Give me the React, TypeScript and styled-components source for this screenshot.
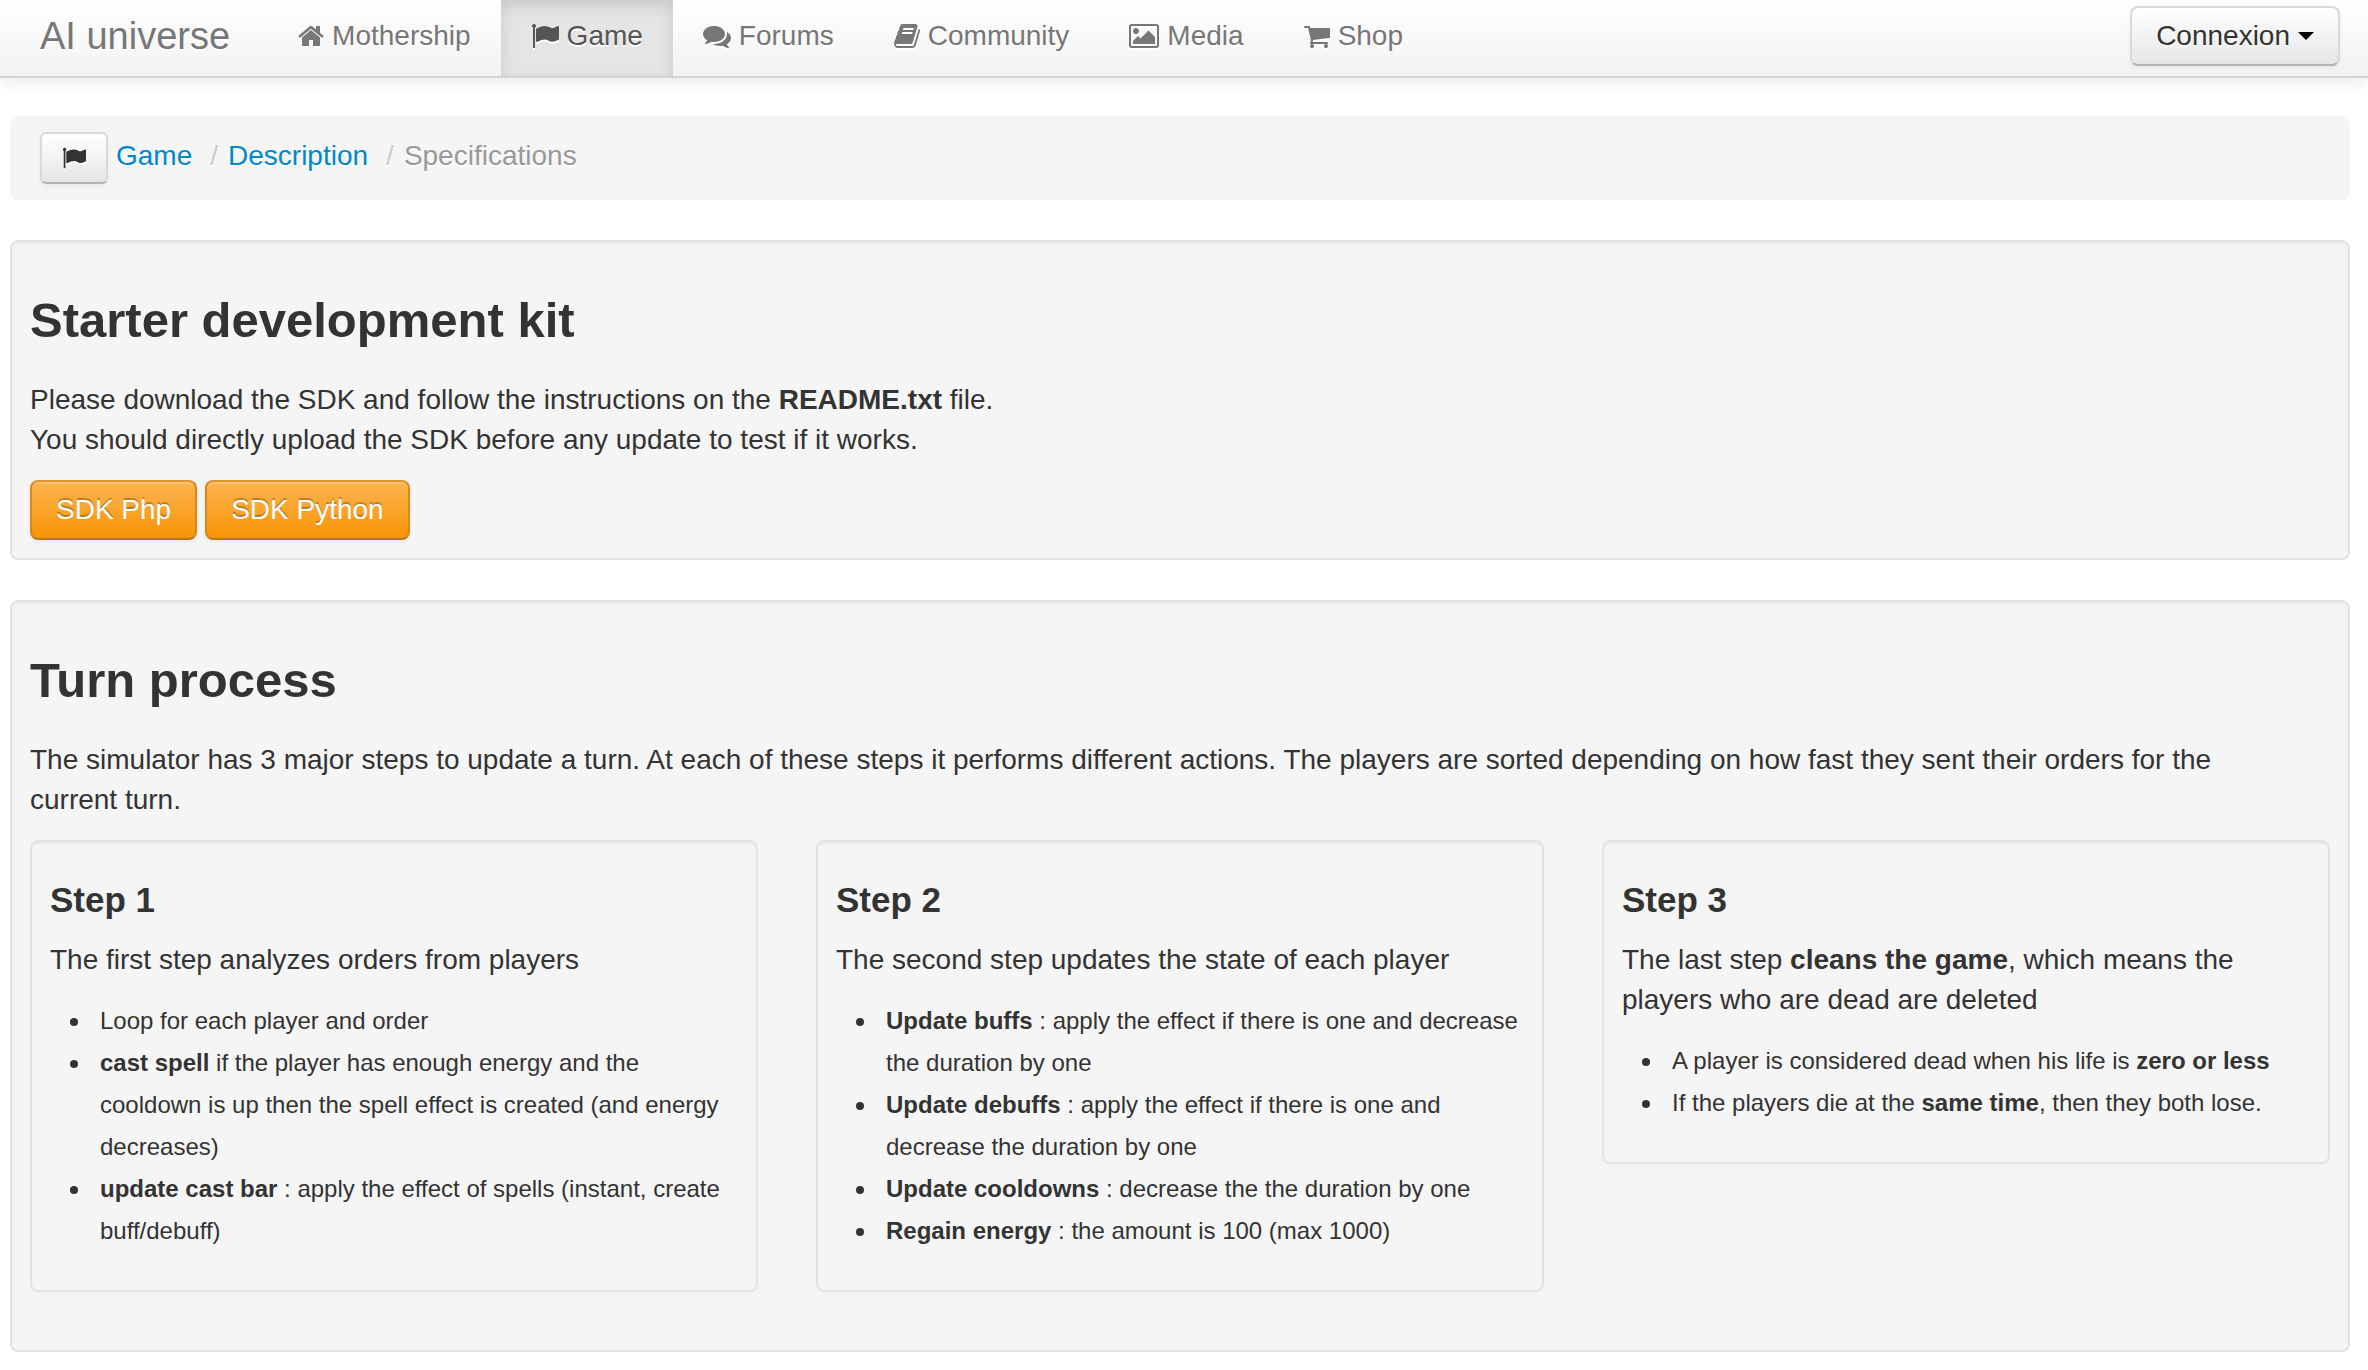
import React from "react";
import styled, { createGlobalStyle, css } from "styled-components";

const GlobalStyle = createGlobalStyle`
  *, *::before, *::after { box-sizing: border-box; }
  body {
    margin: 0;
    background: #fff;
    color: #333;
    font: 28px/40px "Helvetica Neue", "Liberation Sans", Arial, sans-serif;
  }
`;

/* ---------- icons ---------- */

const icons = {
  home: {
    box: "64 0 1664 1792",
    width: 26,
    d: "M1472 992v480q0 26-19 45t-45 19h-384v-384h-256v384h-384q-26 0-45-19t-19-45v-480q0-1 .5-3t.5-3l575-474 575 474q1 2 1 6zm223-69l-62 74q-8 9-21 11h-3q-13 0-21-7l-692-577-692 577q-12 8-24 7-13-2-21-11l-62-74q-8-10-7-23.5t11-21.5l719-599q32-26 76-26t76 26l244 204v-195q0-14 9-23t23-9h192q14 0 23 9t9 23v408l219 182q10 8 11 21.5t-7 23.5z",
  },
  flag: {
    box: "0 0 1792 1792",
    width: 28,
    d: "M320 256q0 72-64 110v1266q0 13-9.500 22.500t-22.500 9.500h-64q-13 0-22.500-9.500t-9.500-22.500v-1266q-64-38-64-110 0-53 37.500-90.500t90.500-37.500 90.500 37.500 37.500 90.500zm1472 64v763q0 25-12.500 38.500t-39.500 27.500q-215 116-369 116-61 0-123.500-22t-108.500-48-115.500-48-142.500-22q-192 0-464 146-17 9-33 9-26 0-45-19t-19-45v-742q0-32 31-55 21-14 79-43 236-120 421-120 107 0 200 29t219 88q38 19 88 19 54 0 117.500-21t110-47 88-47 54.500-21q26 0 45 19t19 45z",
  },
  comments: {
    box: "0 0 1792 1792",
    width: 28,
    d: "M1408 768q0 139-94 257t-256.500 186.500-353.500 68.500q-86 0-176-16-124 88-278 128-36 9-86 16h-3q-11 0-20.500-8t-11.500-21q-1-3-1-6.500t.5-6.500 2-6l2.500-5 3.500-5.500 4-5 4.500-5 4-4.500q5-6 23-25t26-29.500 22.500-29 25-38.500 20.500-44q-124-72-195-177t-71-224q0-139 94-257t256.500-186.500 353.500-68.500 353.500 68.500 256.500 186.500 94 257zm384 256q0 120-71 224.500t-195 176.500q10 24 20.500 44t25 38.500 22.500 29 26 29.500 23 25q1 1 4 4.500t4.500 5 4 5 3.500 5.500l2.500 5 2 6 .5 6.500-1 6.500q-3 14-13 22t-22 7q-50-7-86-16-154-40-278-128-90 16-176 16-271 0-472-132 58 4 88 4 161 0 309-45t264-129q125-92 192-212t67-254q0-77-23-152 129 71 204 178t75 230z",
  },
  book: {
    box: "64 0 1664 1792",
    width: 26,
    d: "M1703 478q40 57 18 129l-275 906q-19 64-76.500 107.500t-122.500 43.500h-923q-77 0-148.500-53.500t-99.500-131.500q-24-67-2-127 0-4 3-27t4-37q1-8-3-21.500t-3-19.500q2-11 8-21t16.500-23.500 16.500-23.500q23-38 45-91.500t30-91.500q3-10 .5-30t-.5-28q3-11 17-28t17-23q21-36 42-92t25-90q1-9-2.500-32t.5-28q4-13 22-30.500t22-22.500q19-26 42.500-84.500t27.500-96.500q1-8-3-25.500t-2-26.500q2-8 9-18t18-23 17-21q8-12 16.500-30.500t15-35 16-36 19.500-32 26.500-23.500 36-11.500 47.500 5.500l-1 3q38-9 51-9h761q74 0 114 56t18 130l-274 906q-36 119-71.500 153.500t-128.500 34.500h-869q-27 0-38 15-11 16-1 43 24 70 144 70h923q29 0 56-15.500t35-41.500l300-987q7-22 5-57 38 15 59 43zm-1064 2q-4 13 2 22.500t20 9.500h608q13 0 25.500-9.500t16.500-22.500l21-64q4-13-2-22.500t-20-9.500h-608q-13 0-25.500 9.500t-16.500 22.500zm-83 256q-4 13 2 22.500t20 9.500h608q13 0 25.500-9.500t16.500-22.500l21-64q4-13-2-22.500t-20-9.500h-608q-13 0-25.500 9.500t-16.500 22.500z",
  },
  picture: {
    box: "-64 0 1920 1792",
    width: 30,
    d: "M576 576q0 80-56 136t-136 56-136-56-56-136 56-136 136-56 136 56 56 136zm1024 384v448h-1408v-192l320-320 160 160 512-512zm96-704h-1600q-13 0-22.500 9.500t-9.500 22.500v1216q0 13 9.500 22.500t22.500 9.500h1600q13 0 22.500-9.500t9.500-22.500v-1216q0-13-9.500-22.500t-22.500-9.500zm160 32v1216q0 66-47 113t-113 47h-1600q-66 0-113-47t-47-113v-1216q0-66 47-113t113-47h1600q66 0 113 47t47 113z",
  },
  cart: {
    box: "64 0 1664 1792",
    width: 26,
    d: "M704 1536q0 52-38 90t-90 38-90-38-38-90 38-90 90-38 90 38 38 90zm896 0q0 52-38 90t-90 38-90-38-38-90 38-90 90-38 90 38 38 90zm128-1088v512q0 24-16.500 42.500t-40.500 21.500l-1044 122q13 60 13 70 0 16-24 64h920q26 0 45 19t19 45-19 45-45 19h-1024q-26 0-45-19t-19-45q0-11 8-31.500t16-36 21.500-40 15.500-29.500l-177-823h-204q-26 0-45-19t-19-45 19-45 45-19h256q16 0 28.500 6.500t19.500 15.500 13 24.500 8 26 5.500 29.500 4.500 26h1201q26 0 45 19t19 45z",
  },
};

type IconName = keyof typeof icons;

const IconSvg = styled.svg`
  flex: none;
  fill: currentColor;
  filter: drop-shadow(0 2px 0 #fff);
`;

function Icon({ name, size = 28 }: { name: IconName; size?: number }) {
  const icon = icons[name];
  return (
    <IconSvg
      viewBox={icon.box}
      width={Math.round((icon.width * size) / 28)}
      height={size}
      aria-hidden="true"
    >
      <path d={icon.d} />
    </IconSvg>
  );
}

/* ---------- buttons ---------- */

const buttonBase = css`
  display: inline-flex;
  align-items: center;
  gap: 8px;
  border: 2px solid;
  border-radius: 8px;
  font: inherit;
  cursor: pointer;
  text-decoration: none;
  box-shadow: inset 0 2px 0 rgba(255, 255, 255, 0.2), 0 2px 4px rgba(0, 0, 0, 0.05);
`;

const LightButton = styled.button<{ $small?: boolean }>`
  ${buttonBase}
  padding: ${(p) => (p.$small ? "4px 20px" : "8px 24px")};
  height: ${(p) => (p.$small ? "52px" : "60px")};
  border-radius: ${(p) => (p.$small ? "6px" : "8px")};
  border-color: #d9d9d9 #d9d9d9 #b3b3b3;
  color: #333;
  background: linear-gradient(#fff, #e6e6e6) padding-box, #e6e6e6;
  text-shadow: 0 2px 2px rgba(255, 255, 255, 0.75);
`;

const DownloadButton = styled.a`
  ${buttonBase}
  padding: 8px 24px;
  border-color: #df922d #d98718 #b9771c;
  color: #fff;
  background: linear-gradient(#fbb450, #f89406) padding-box, #f89406;
  text-shadow: 0 -2px 0 rgba(0, 0, 0, 0.25);
`;

const Caret = styled.span`
  border: 8px solid transparent;
  border-top-color: #000;
  border-bottom: 0;
`;

/* ---------- navigation bar ---------- */

const Navbar = styled.header`
  display: flex;
  align-items: stretch;
  justify-content: space-between;
  padding: 0 28px 0 40px;
  border-bottom: 2px solid #d4d4d4;
  background: linear-gradient(#fff, #f2f2f2);
  box-shadow: 0 2px 16px rgba(0, 0, 0, 0.1);
`;

const NavGroup = styled.nav`
  display: flex;
`;

const Brand = styled.a`
  margin-right: 38px;
  padding: 16px 0 20px;
  color: #777;
  font-size: 38px;
  text-decoration: none;
  text-shadow: 0 2px 0 #fff;
`;

const NavLink = styled.a<{ $active?: boolean }>`
  display: flex;
  align-items: center;
  gap: 8px;
  padding: 16px 30px 20px;
  color: ${(p) => (p.$active ? "#555" : "#777")};
  background: ${(p) => (p.$active ? "#e5e5e5" : "transparent")};
  box-shadow: ${(p) => (p.$active ? "inset 0 6px 16px rgba(0, 0, 0, 0.125)" : "none")};
  text-decoration: none;
  text-shadow: 0 2px 0 #fff;
`;

const Account = styled.div`
  padding: 6px 0 10px;
`;

/* ---------- page body ---------- */

const Page = styled.main`
  display: flex;
  flex-direction: column;
  gap: 40px;
  padding: 38px 18px 18px 10px;
`;

const Breadcrumb = styled.nav`
  display: flex;
  align-items: flex-start;
  gap: 8px;
  padding: 16px 30px;
  border-radius: 8px;
  background: #f5f5f5;
  text-shadow: 0 2px 0 #fff;
`;

const Trail = styled.ol`
  display: flex;
  margin: 0;
  padding: 4px 0;
  list-style: none;
`;

const Crumb = styled.li`
  color: #999;

  &:not(:last-child)::after {
    content: "/";
    padding: 0 10px 0 18px;
    color: #ccc;
  }

  a {
    color: #08c;
    text-decoration: none;
  }
`;

const Well = styled.section`
  padding: 18px;
  border: 2px solid #e3e3e3;
  border-radius: 8px;
  background: #f5f5f5;
  box-shadow: inset 0 2px 2px rgba(0, 0, 0, 0.05);
`;

const Title = styled.h2`
  margin: 20px 0;
  font-size: 49px;
  line-height: 80px;
`;

const Subtitle = styled.h3`
  margin: 20px 0;
  font-size: 35px;
  line-height: 40px;
`;

const Text = styled.p`
  margin: 0 0 20px;
`;

const Buttons = styled.div`
  display: flex;
  gap: 8px;
`;

const Steps = styled.div`
  display: grid;
  grid-template-columns: repeat(3, 1fr);
  align-items: start;
  gap: 58px;
  margin-bottom: 40px;
`;

const List = styled.ul`
  margin: 0 0 20px;
  padding: 0 0 0 50px;
  font-size: 24px;
  line-height: 42px;
  list-style: none;

  li::before {
    content: "";
    float: left;
    width: 8px;
    height: 8px;
    margin: 18px 0 0 -30px;
    border-radius: 50%;
    background: #333;
  }
`;

const navItems: { label: string; icon: IconName; active?: boolean }[] = [
  { label: "Mothership", icon: "home" },
  { label: "Game", icon: "flag", active: true },
  { label: "Forums", icon: "comments" },
  { label: "Community", icon: "book" },
  { label: "Media", icon: "picture" },
  { label: "Shop", icon: "cart" },
];

export default function App() {
  return (
    <>
      <GlobalStyle />
      <Navbar>
        <NavGroup>
          <Brand href="#">AI universe</Brand>
          {navItems.map((item) => (
            <NavLink key={item.label} href="#" $active={item.active}>
              <Icon name={item.icon} />
              {item.label}
            </NavLink>
          ))}
        </NavGroup>
        <Account>
          <LightButton type="button">
            Connexion
            <Caret />
          </LightButton>
        </Account>
      </Navbar>

      <Page>
        <Breadcrumb aria-label="Breadcrumb">
          <LightButton type="button" $small aria-label="Game">
            <Icon name="flag" size={24} />
          </LightButton>
          <Trail>
            <Crumb><a href="#">Game</a></Crumb>
            <Crumb><a href="#">Description</a></Crumb>
            <Crumb>Specifications</Crumb>
          </Trail>
        </Breadcrumb>

        <Well>
          <Title>Starter development kit</Title>
          <Text>
            Please download the SDK and follow the instructions on the <strong>README.txt</strong> file.
            <br />
            You should directly upload the SDK before any update to test if it works.
          </Text>
          <Buttons>
            <DownloadButton href="#">SDK Php</DownloadButton>
            <DownloadButton href="#">SDK Python</DownloadButton>
          </Buttons>
        </Well>

        <Well>
          <Title>Turn process</Title>
          <Text>
            The simulator has 3 major steps to update a turn. At each of these steps it performs different
            actions. The players are sorted depending on how fast they sent their orders for the current&nbsp;turn.
          </Text>
          <Steps>
            <Well>
              <Subtitle>Step 1</Subtitle>
              <Text>The first step analyzes orders from players</Text>
              <List>
                <li>Loop for each player and order</li>
                <li>
                  <strong>cast spell</strong> if the player has enough energy and the cooldown is up then the
                  spell effect is created (and energy decreases)
                </li>
                <li>
                  <strong>update cast bar</strong> : apply the effect of spells (instant, create buff/debuff)
                </li>
              </List>
            </Well>
            <Well>
              <Subtitle>Step 2</Subtitle>
              <Text>The second step updates the state of each player</Text>
              <List>
                <li>
                  <strong>Update buffs</strong> : apply the effect if there is one and decrease the duration
                  by one
                </li>
                <li>
                  <strong>Update debuffs</strong> : apply the effect if there is one and decrease the duration
                  by one
                </li>
                <li><strong>Update cooldowns</strong> : decrease the the duration by one</li>
                <li><strong>Regain energy</strong> : the amount is 100 (max 1000)</li>
              </List>
            </Well>
            <Well>
              <Subtitle>Step 3</Subtitle>
              <Text>
                The last step <strong>cleans the game</strong>, which means the players who are dead are deleted
              </Text>
              <List>
                <li>A player is considered dead when his life is <strong>zero or less</strong></li>
                <li>If the players die at the <strong>same time</strong>, then they both lose.</li>
              </List>
            </Well>
          </Steps>
        </Well>
      </Page>
    </>
  );
}
